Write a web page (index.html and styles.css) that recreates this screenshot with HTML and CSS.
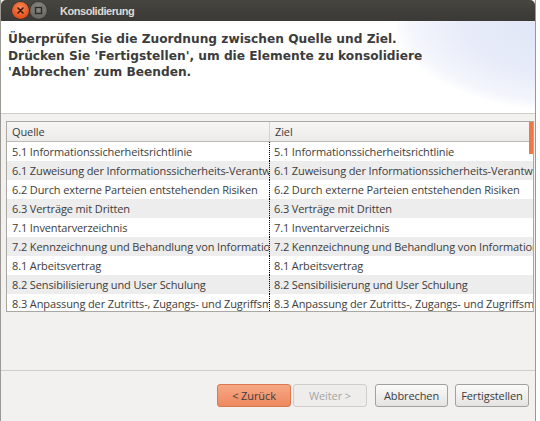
FILE: index.html
```html
<!DOCTYPE html>
<html>
<head>
<meta charset="utf-8">
<link rel="stylesheet" href="styles.css">
</head>
<body>
<div class="window">
  <div class="titlebar">
    <div class="winbtn close">
      <svg width="17" height="17" viewBox="0 0 17 17"><path d="M6 6 L11 11 M11 6 L6 11" stroke="#3a1a0c" stroke-width="1.6" stroke-linecap="round"/></svg>
    </div>
    <div class="winbtn max">
      <svg width="17" height="17" viewBox="0 0 17 17"><rect x="5.5" y="5.5" width="6" height="6" fill="none" stroke="#2c2b28" stroke-width="1.4"/></svg>
    </div>
    <div class="title">Konsolidierung</div>
  </div>
  <div class="header">
    <div class="swoosh"></div>
    <p class="message">Überprüfen Sie die Zuordnung zwischen Quelle und Ziel.<br>Drücken Sie 'Fertigstellen', um die Elemente zu konsolidiere<br>'Abbrechen' zum Beenden.</p>
  </div>
  <div class="content">
    <div class="table">
      <div class="thead">
        <div class="th first">Quelle</div>
        <div class="th">Ziel</div>
      </div>
      <div class="tbody">
        <div class="tr"><div class="td first">5.1 Informationssicherheitsrichtlinie</div><div class="td">5.1 Informationssicherheitsrichtlinie</div></div>
        <div class="tr alt"><div class="td first">6.1 Zuweisung der Informationssicherheits-Verantwortlichkeiten</div><div class="td">6.1 Zuweisung der Informationssicherheits-Verantwortlichkeiten</div></div>
        <div class="tr"><div class="td first">6.2 Durch externe Parteien entstehenden Risiken</div><div class="td">6.2 Durch externe Parteien entstehenden Risiken</div></div>
        <div class="tr alt"><div class="td first">6.3 Verträge mit Dritten</div><div class="td">6.3 Verträge mit Dritten</div></div>
        <div class="tr"><div class="td first">7.1 Inventarverzeichnis</div><div class="td">7.1 Inventarverzeichnis</div></div>
        <div class="tr alt"><div class="td first">7.2 Kennzeichnung und Behandlung von Informationen</div><div class="td">7.2 Kennzeichnung und Behandlung von Informationen</div></div>
        <div class="tr"><div class="td first">8.1 Arbeitsvertrag</div><div class="td">8.1 Arbeitsvertrag</div></div>
        <div class="tr alt"><div class="td first">8.2 Sensibilisierung und User Schulung</div><div class="td">8.2 Sensibilisierung und User Schulung</div></div>
        <div class="tr"><div class="td first">8.3 Anpassung der Zutritts-, Zugangs- und Zugriffsmöglichkeiten</div><div class="td">8.3 Anpassung der Zutritts-, Zugangs- und Zugriffsmöglichkeiten</div></div>
      </div>
      <div class="scrollbar"></div>
    </div>
  </div>
  <div class="footer">
    <button class="btn primary">&lt; Zurück</button>
    <button class="btn disabled">Weiter &gt;</button>
    <button class="btn cancel">Abbrechen</button>
    <button class="btn finish">Fertigstellen</button>
  </div>
</div>
</body>
</html>
```

FILE: styles.css
```css
html, body {
  margin: 0;
  padding: 0;
  background: #ffffff;
}
body {
  width: 540px;
  height: 421px;
  overflow: hidden;
}
.window {
  width: 534px;
  height: 421px;
  border-left: 1px solid #9a9893;
  border-right: 1px solid #9a9893;
  background: #f2f1f0;
  display: flex;
  flex-direction: column;
  font-family: "Open Sans", "Liberation Sans", sans-serif;
  color: #3c3c3c;
}
.titlebar {
  height: 21px;
  flex: none;
  background: linear-gradient(#46453f, #3a3935);
  border-radius: 5px 5px 0 0;
  display: flex;
  align-items: center;
  padding-left: 11px;
  gap: 1px;
}
.winbtn {
  width: 17px;
  height: 17px;
  border-radius: 50%;
  display: flex;
}
.winbtn.close {
  background: radial-gradient(circle at 50% 35%, #f58a5c, #e2511c 70%, #b8400f);
  box-shadow: 0 0 0 0.5px #2a2925;
}
.winbtn.max {
  background: radial-gradient(circle at 50% 35%, #8c8a84, #6b6964 70%, #55534f);
  box-shadow: 0 0 0 0.5px #2a2925;
}
.title {
  margin-left: 12px;
  font-family: "Liberation Sans", sans-serif;
  font-weight: bold;
  font-size: 11px;
  letter-spacing: -0.45px;
  color: #dfdbd2;
  padding-top: 1px;
}
.header {
  position: relative;
  height: 92px;
  flex: none;
  background: #ffffff;
  border-bottom: 1px solid #cfcdca;
  overflow: hidden;
}
.swoosh {
  position: absolute;
  right: -120px;
  top: -60px;
  width: 260px;
  height: 150px;
  border-radius: 50%;
  background: radial-gradient(ellipse at 70% 40%, #dde4f6 0%, #e8ecf9 45%, #f4f6fc 65%, rgba(255,255,255,0) 72%);
}
.message {
  position: relative;
  margin: 0;
  padding: 10px 0 0 7px;
  font-family: "DejaVu Sans", sans-serif;
  font-weight: bold;
  font-size: 12.2px;
  line-height: 16.5px;
  color: #3c3c3c;
  white-space: nowrap;
}
.content {
  padding: 7px 1px 0 5px;
  height: 249px;
  flex: none;
}
.table {
  position: relative;
  height: 189px;
  border: 1px solid #a9a8a5;
  background: #ffffff;
  overflow: hidden;
}
.thead {
  display: grid;
  grid-template-columns: 263px 1fr;
  height: 19px;
  border-bottom: 1px solid #bcbab6;
  background: linear-gradient(#f7f6f5, #ecebe9);
}
.th {
  font-size: 11px;
  letter-spacing: -0.1px;
  line-height: 19px;
  padding-left: 5px;
  color: #3c3c3c;
}
.th.first {
  border-right: 1px solid #d4d2cf;
}
.tr {
  display: grid;
  grid-template-columns: 263px 1fr;
  height: 19px;
  background: #ffffff;
}
.tr.alt {
  background: #ededed;
}
.td {
  font-size: 11px;
  letter-spacing: -0.12px;
  line-height: 18px;
  padding-top: 1px;
  padding-left: 4px;
  white-space: nowrap;
  overflow: hidden;
  color: #3c3c3c;
}
.td.first {
  padding-left: 5px;
  border-right: 1px dotted #000000;
}
.scrollbar {
  position: absolute;
  right: 0;
  top: 0;
  width: 4px;
  height: 32px;
  background: #f07746;
}
.footer {
  flex: 1;
  border-top: 1px solid #cfcdca;
  display: flex;
  align-items: flex-start;
  justify-content: flex-end;
  padding: 13px 6px 0 0;
}
.btn {
  width: 74px;
  height: 23px;
  padding: 0;
  border: 1px solid #a3a19d;
  border-radius: 3px;
  background: linear-gradient(#fbfbfa, #e4e3e1);
  font-family: "Open Sans", "Liberation Sans", sans-serif;
  font-size: 11px;
  letter-spacing: -0.1px;
  color: #3c3c3c;
}
.btn.primary {
  background: linear-gradient(#f6a885, #ee8860);
  border-color: #d9774f;
  color: #3c3c3c;
}
.btn.disabled {
  margin-left: 2px;
  background: #eeedec;
  border-color: #cfcdca;
  color: #a6a5a2;
}
.btn.cancel {
  width: 73px;
  margin-left: 8px;
}
.btn.finish {
  margin-left: 7px;
}
```
